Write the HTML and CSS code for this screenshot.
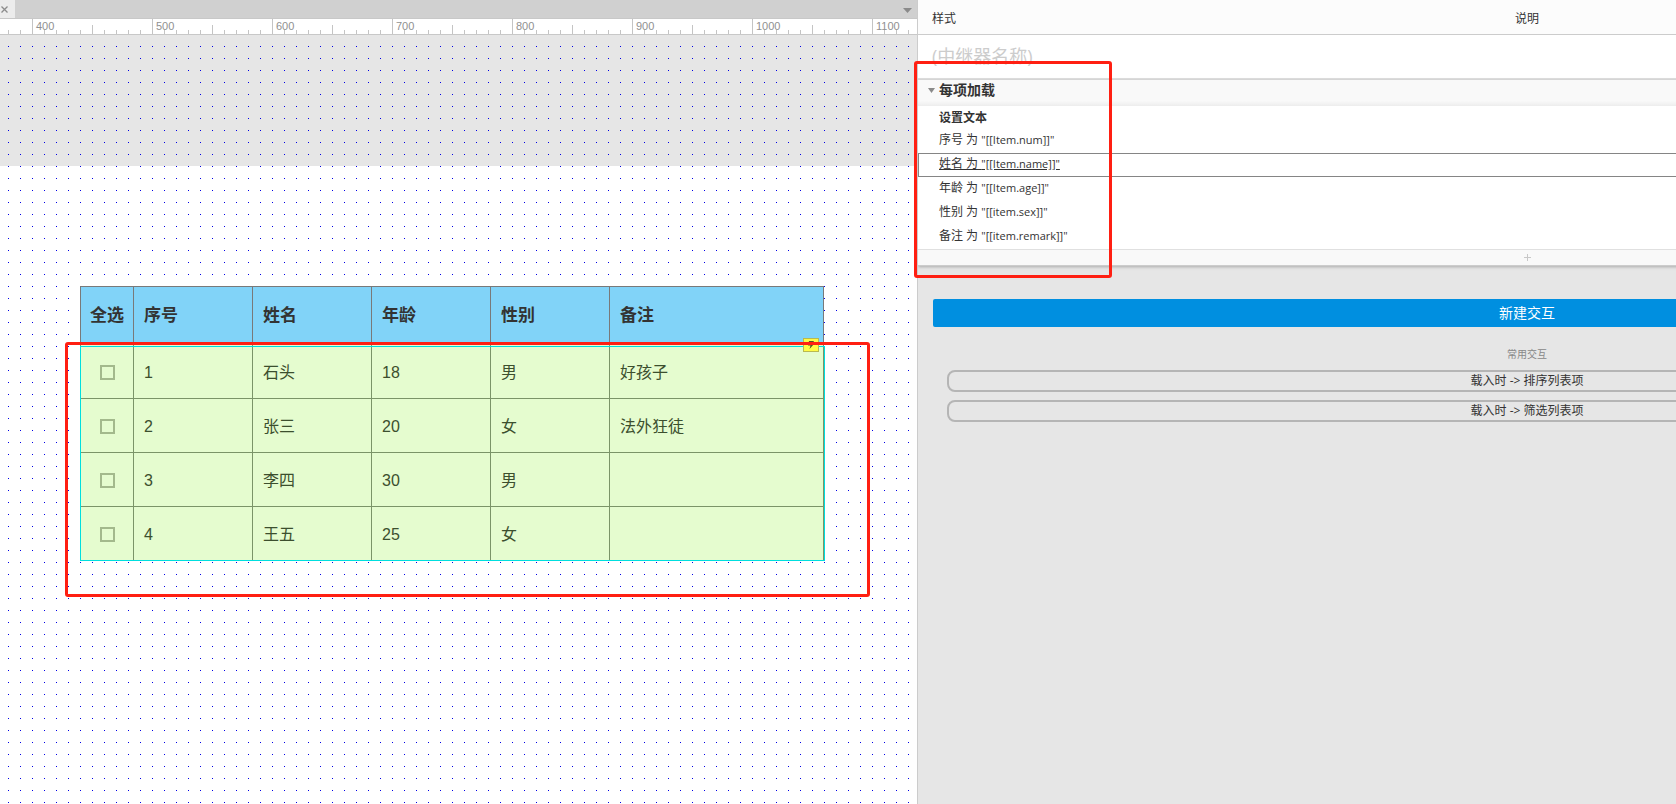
FILE: index.html
```html
<!DOCTYPE html>
<html lang="zh-CN">
<head>
<meta charset="utf-8">
<title>中继器</title>
<link rel="stylesheet" href="styles.css">
</head>
<body>
<div class="app">
  <main class="editor">
    <div class="tabbar">
      <button class="tab-close" type="button" aria-label="关闭">
        <svg width="7" height="7" viewBox="0 0 7 7"><path d="M0.500 0.500L6.500 6.500M6.500 0.500L0.500 6.500" stroke="#8c8c8c" stroke-width="1.300"/></svg>
      </button>
      <button class="tab-more" type="button" aria-label="更多">
        <svg width="9" height="5" viewBox="0 0 9 5"><path d="M0 0H9L4.500 5Z" fill="#8a8a8a"/></svg>
      </button>
    </div>
    <div class="ruler">
      <svg class="fill" aria-hidden="true">
        <defs><pattern id="ticks" x="32" y="0" width="120" height="15" patternUnits="userSpaceOnUse">
          <path d="M0.500 0V15M60.500 6V15M12.500 11V15M24.500 11V15M36.500 11V15M48.500 11V15M72.500 11V15M84.500 11V15M96.500 11V15M108.500 11V15" stroke="#c4c4c4"/>
        </pattern></defs>
        <rect width="100%" height="100%" fill="url(#ticks)"/>
      </svg>
      <div class="marks"><span>400</span><span>500</span><span>600</span><span>700</span><span>800</span><span>900</span><span>1000</span><span>1100</span></div>
    </div>
    <div class="canvas">
      <div class="offpage"></div>
      <svg class="fill" aria-hidden="true">
        <defs><pattern id="dots" x="8" y="11" width="12" height="12" patternUnits="userSpaceOnUse"><rect width="1" height="1" fill="#0000e6"/></pattern></defs>
        <rect width="100%" height="100%" fill="url(#dots)"/>
      </svg>
      <div class="repeater">
        <table>
          <colgroup><col class="c-check"><col class="c-data"><col class="c-data"><col class="c-data"><col class="c-data"><col></colgroup>
          <thead><tr><th class="pick">全选</th><th>序号</th><th>姓名</th><th>年龄</th><th>性别</th><th>备注</th></tr></thead>
          <tbody>
            <tr><td class="pick"><input type="checkbox" aria-label="选择 1"></td><td>1</td><td>石头</td><td>18</td><td>男</td><td>好孩子</td></tr>
            <tr><td class="pick"><input type="checkbox" aria-label="选择 2"></td><td>2</td><td>张三</td><td>20</td><td>女</td><td>法外狂徒</td></tr>
            <tr><td class="pick"><input type="checkbox" aria-label="选择 3"></td><td>3</td><td>李四</td><td>30</td><td>男</td><td></td></tr>
            <tr><td class="pick"><input type="checkbox" aria-label="选择 4"></td><td>4</td><td>王五</td><td>25</td><td>女</td><td></td></tr>
          </tbody>
        </table>
        <div class="selection"></div>
        <div class="event"><svg width="8" height="10" viewBox="0 0 8 10"><path d="M2 1H7L5.500 4H7L2.500 9L3.500 5.500H1Z" fill="#55502c"/></svg></div>
      </div>
    </div>
  </main>

  <aside class="panel">
    <div class="panel-body">
      <nav class="panel-tabs"><a href="#style">样式</a><a class="notes" href="#notes">说明</a></nav>
      <div class="name-row"><input type="text" placeholder="(中继器名称)" aria-label="中继器名称"></div>
      <section>
        <h2><svg width="7" height="5" viewBox="0 0 7 5"><path d="M0 0H7L3.500 5Z" fill="#8a8a8a"/></svg>每项加载</h2>
        <h3>设置文本</h3>
        <ul>
          <li>序号 为 <span class="expr">"[[Item.num]]"</span></li>
          <li class="active">姓名 为 <span class="expr">"[[Item.name]]"</span></li>
          <li>年龄 为 <span class="expr">"[[Item.age]]"</span></li>
          <li>性别 为 <span class="expr">"[[item.sex]]"</span></li>
          <li>备注 为 <span class="expr">"[[item.remark]]"</span></li>
        </ul>
        <button class="add" type="button" aria-label="添加"><svg width="7" height="7" viewBox="0 0 7 7"><path d="M3.500 0V7M0 3.500H7" stroke="#c8c8c8"/></svg></button>
      </section>
      <div class="actions">
        <button class="primary" type="button">新建交互</button>
        <p>常用交互</p>
        <button class="outline" type="button">载入时 -&gt; 排序列表项</button>
        <button class="outline" type="button">载入时 -&gt; 筛选列表项</button>
      </div>
    </div>
  </aside>
  <div class="callout callout-table"></div>
  <div class="callout callout-panel"></div>
</div>
</body>
</html>
```

FILE: styles.css
```css
* { box-sizing: border-box; }

body {
  margin: 0;
  color: #333;
  font: 12px/18px "Open Sans", "Noto Sans CJK SC", sans-serif;
}

button, input {
  margin: 0;
  padding: 0;
  border: 0;
  background: none;
  color: inherit;
  font: inherit;
}

a { color: inherit; text-decoration: none; }

svg { display: block; }

.app {
  position: relative;
  display: grid;
  grid-template-columns: minmax(0, 918fr) minmax(0, 758fr);
  height: 100vh;
  overflow: hidden;
}

.editor {
  display: flex;
  flex-direction: column;
  border-right: 1px solid #ccc;
}

.tabbar {
  display: flex;
  justify-content: space-between;
  height: 19px;
  background: #d0d0d0;
  border-bottom: 1px solid #c8c8c8;
}

.tab-close {
  width: 15px;
  padding-left: 1px;
  background: #ececec;
}

.tab-more { padding: 2px 5px 0; }

.ruler {
  position: relative;
  height: 16px;
  overflow: hidden;
  background: #fff;
  border-bottom: 1px solid #c8c8c8;
}

.fill {
  position: absolute;
  inset: 0;
  width: 100%;
  height: 100%;
}

.marks {
  position: relative;
  display: flex;
  padding-left: 36px;
  color: #909090;
  font: 11px/14px "Liberation Sans", sans-serif;
}

.marks span { flex: 0 0 120px; }

.canvas {
  position: relative;
  flex: 1;
  background: #fff;
}

.offpage { height: 131px; background: #e6e6e6; }

.repeater {
  position: absolute;
  left: 80px;
  top: 251px;
  width: 744px;
}

table {
  width: 100%;
  border-collapse: collapse;
  table-layout: fixed;
  color: #3c4f2e;
  font: 16px/24px "Liberation Sans", "Noto Sans CJK SC", sans-serif;
}

.c-check { width: 53px; }
.c-data { width: 119px; }

th, td {
  height: 54px;
  padding: 2px 10px 0;
  border: 1px solid #7b9468;
  background: #e5fccf;
  text-align: left;
}

th {
  height: 58px;
  padding-top: 0;
  border-color: #797979;
  background: #81d3f8;
  color: #333;
  font-size: 17px;
}

.pick { padding-left: 0; padding-right: 0; text-align: center; }

.pick input {
  display: block;
  width: 15px;
  height: 15px;
  margin: 0 auto;
  appearance: none;
  border: 2px solid #a3b98c;
}

.selection {
  position: absolute;
  inset: 60px -1px 0 0;
  border: 1px solid #00dede;
}

.event {
  position: absolute;
  right: 5px;
  top: 52px;
  display: grid;
  place-items: center;
  width: 16px;
  height: 14px;
  border: 1px solid #b9b950;
  background: #fffb45;
}

.panel {
  overflow: hidden;
  background: #e6e6e6;
}

/* The docked panel runs on past the right edge of the window. */
.panel-body { width: 160.7%; }

.panel-tabs {
  display: grid;
  grid-template-columns: 1fr auto 1fr;
  align-items: center;
  height: 35px;
  padding: 4px 14px 0;
  border-bottom: 1px solid #ccc;
  background: #fcfcfc;
}

.name-row {
  height: 45px;
  padding: 9px 14px 0;
  border-bottom: 2px solid #dedede;
  background: #fff;
}

.name-row input {
  width: 100%;
  height: 24px;
  font-size: 18px;
}

.name-row input::placeholder { color: #ccc; opacity: 1; }

section {
  background: #fff;
  box-shadow: 0 1px 3px #aaa;
}

h2, h3, p, ul { margin: 0; }

h2 {
  display: flex;
  align-items: center;
  gap: 4px;
  height: 26px;
  padding: 0 10px 6px;
  background: linear-gradient(#f9f9f9 80%, #ededed);
  font-size: 14px;
}

h3 {
  height: 23px;
  padding-left: 21px;
  font-size: 12px;
  line-height: 24px;
}

ul { padding: 0; list-style: none; }

li {
  height: 24px;
  padding-left: 20px;
  border: 1px solid transparent;
  line-height: 20px;
}

.active { border-color: #858585; text-decoration: underline; }

.expr { font-size: 11px; }

.add {
  display: grid;
  place-items: center;
  width: 100%;
  height: 17px;
  border-top: 1px solid #e0e0e0;
  border-bottom: 1px solid #ccc;
  background: #f9f9f9;
}

.actions {
  display: flex;
  flex-direction: column;
  padding: 33px 15px 0;
}

.primary {
  height: 28px;
  border-radius: 2px;
  background: #008fe0;
  color: #fff;
  font-size: 14px;
}

.actions p {
  margin: 18px 0 7px;
  color: #888;
  font-size: 10px;
  text-align: center;
}

.outline {
  height: 22px;
  margin: 0 14px 8px;
  border: 2px solid #b5b5b5;
  border-radius: 8px;
  line-height: 18px;
}

.callout {
  position: absolute;
  border: 3px solid #ff1f12;
  border-radius: 3px;
  pointer-events: none;
}

.callout-table {
  left: 65px;
  top: 342px;
  width: 805px;
  height: 255px;
}

.callout-panel {
  left: 914px;
  top: 61px;
  width: 198px;
  height: 217px;
}
```
